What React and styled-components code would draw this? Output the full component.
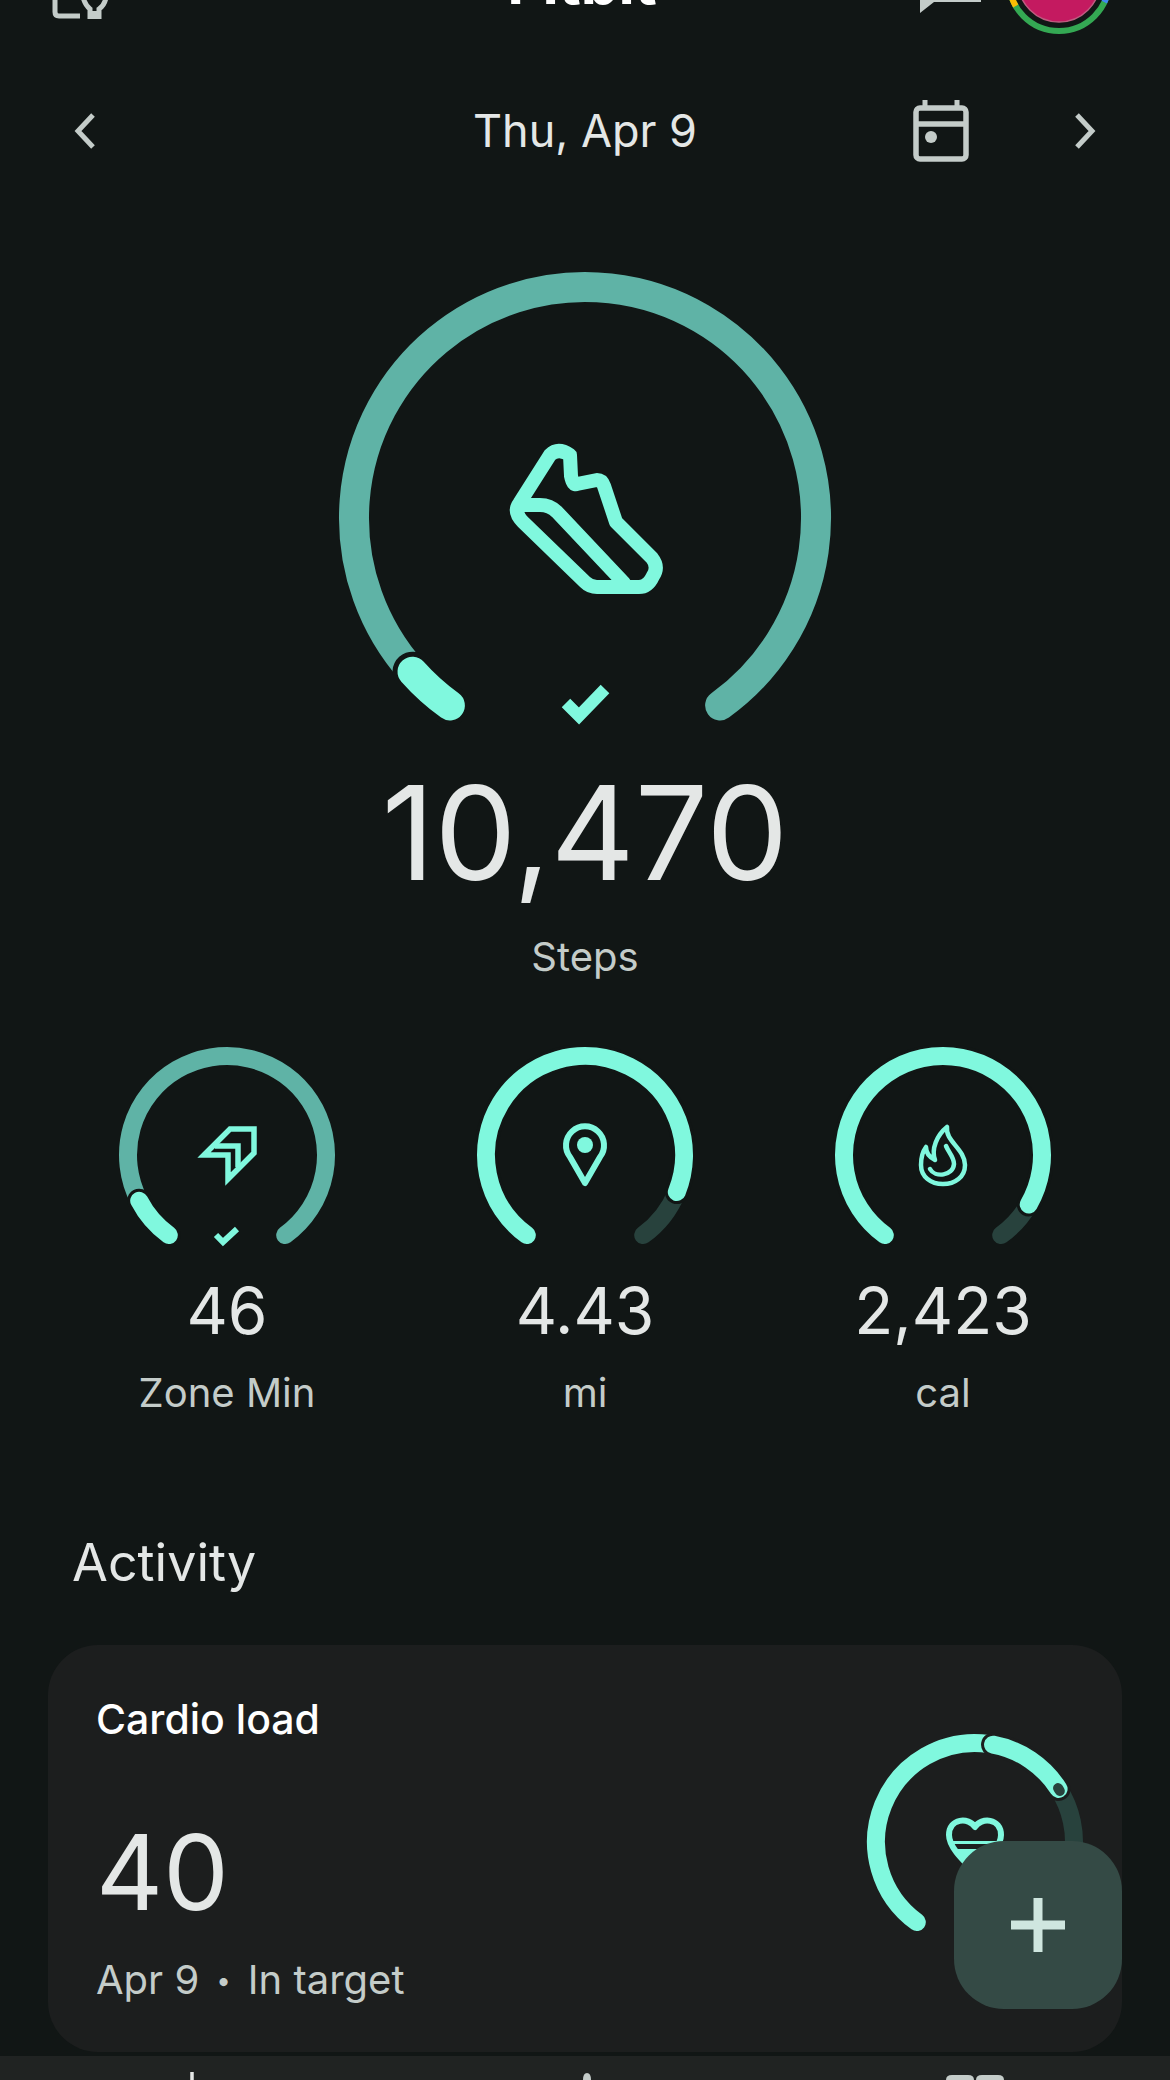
import React from 'react';
import styled, { createGlobalStyle } from 'styled-components';

const BRIGHT = '#80f8de';
const DIM = '#5fb3a6';
const DARK = '#28423d';
const BG = '#111615';
const CARD = '#1c1e1e';

const point = (r, a) => {
  const rad = (a * Math.PI) / 180;
  return [r * Math.sin(rad), -r * Math.cos(rad)];
};

const arcPath = (r, from, to) => {
  const [x0, y0] = point(r, from);
  const [x1, y1] = point(r, to);
  const large = to - from > 180 ? 1 : 0;
  return `M ${x0} ${y0} A ${r} ${r} 0 ${large} 1 ${x1} ${y1}`;
};

function Arc({ r, from, to, width, color, cap = 'round' }) {
  return (
    <path
      d={arcPath(r, from, to)}
      fill="none"
      stroke={color}
      strokeWidth={width}
      strokeLinecap={cap}
    />
  );
}

function Check({ d, width }) {
  return <path d={d} fill="none" stroke={BRIGHT} strokeWidth={width} strokeMiterlimit="8" />;
}

const ShoeIcon = () => (
  <g fill="none" stroke={BRIGHT} strokeWidth="14" strokeLinejoin="round" strokeLinecap="round">
    <path d="M -65.5 -15 L -35 -63 Q -27 -71 -15 -63 L -14 -42 Q -12 -32 -8 -34 L 12 -38 Q 17 -38 19 -32 L 31 4 L 67 40 Q 74 49 68 58 Q 63 69 54 69 L 12 69 Q 5 69 0 64 L -62 4 Q -72 -6 -65.5 -15 Z" />
    <path d="M -65 -13 L -45 -13 Q -35 -13 -28 -6 L 39 65" />
  </g>
);

const ZoneIcon = () => (
  <g fill="none" stroke={BRIGHT} strokeWidth="5.5" strokeMiterlimit="6">
    <path d="M -23 0 L 3 -26 L 27 -26 L 27 -2 L 1 24 L 1 0 Z" />
    <path d="M -12 -9 L 11 -9 L 11 12" />
  </g>
);

const PinIcon = () => (
  <g>
    <path
      d="M 0 28 L -15 2 A 19 19 0 1 1 15 2 Z"
      fill="none"
      stroke={BRIGHT}
      strokeWidth="6"
      strokeLinejoin="round"
    />
    <circle cx="0" cy="-10" r="8" fill={BRIGHT} />
  </g>
);

const FlameIcon = () => (
  <g fill="none" stroke={BRIGHT} strokeWidth="4.5" strokeLinecap="round" strokeLinejoin="round">
    <path d="M 4 -28 C 2 -14 22 -6 22 10 C 22 22 12 29 0 29 C -12 29 -22 22 -22 10 C -22 2 -20 -4 -17 -8 C -17 -2 -14 2 -8 5 C -12 -6 -6 -20 4 -28 Z" />
    <path d="M -13 14 C -8 23 10 21 11 9 C 11 2 6 -2 3 -9" />
  </g>
);

const HeartIcon = () => (
  <g>
    <path
      d="M 0 -15 C -6 -25 -26 -24 -26 -7 C -26 6 -10 20 0 30 C 10 20 26 6 26 -7 C 26 -24 6 -25 0 -15 Z"
      fill="none"
      stroke={BRIGHT}
      strokeWidth="6"
      strokeLinejoin="round"
    />
    <rect x="-24" y="-1" width="48" height="3" fill={BRIGHT} />
    <path d="M -20 7 L 20 7 L 0 28 Z" fill={BRIGHT} />
  </g>
);

const stats = [
  {
    value: '46',
    label: 'Zone Min',
    icon: <ZoneIcon />,
    track: [-117.5, 144],
    trackColor: DIM,
    bright: [-144, -117.5],
    check: true,
  },
  {
    value: '4.43',
    label: 'mi',
    icon: <PinIcon />,
    track: [112, 144],
    trackColor: DARK,
    bright: [-144, 112],
  },
  {
    value: '2,423',
    label: 'cal',
    icon: <FlameIcon />,
    track: [120, 144],
    trackColor: DARK,
    bright: [-144, 120],
  },
];

function StatRing({ stat }) {
  return (
    <RingSvg viewBox="-110 -110 220 202" width="220" height="202">
      <Arc r={99} from={stat.track[0]} to={stat.track[1]} width={18} color={stat.trackColor} />
      <Arc r={99} from={stat.bright[0]} to={stat.bright[1]} width={24} color={BG} />
      <Arc r={99} from={stat.bright[0]} to={stat.bright[1]} width={18} color={BRIGHT} />
      {stat.icon}
      {stat.check && <Check d="M -11 80 L -4 87 L 10 74" width={6} />}
    </RingSvg>
  );
}

export default function App() {
  return (
    <Page>
      <GlobalStyle />
      <Header>
        <HeaderLeft>
          <svg width="60" height="22" viewBox="0 -12 60 22">
            <path d="M 3 -12 L 3 3 Q 3 7 7 7 L 28 7" fill="none" stroke="#c4ccc9" strokeWidth="5" />
            <path d="M 31 -12 Q 33 -4 38 0 L 38 8 L 47 8 L 47 0 Q 53 -4 54 -12" fill="none" stroke="#c4ccc9" strokeWidth="5" />
            <rect x="38" y="2" width="9" height="6" fill="#c4ccc9" />
          </svg>
        </HeaderLeft>
        <AppTitle>Fitbit</AppTitle>
        <HeaderRight>
          <ChatTail width="70" height="16" viewBox="0 0 70 16">
            <path d="M 1 0 L 1 13 L 15 2 L 62 2 L 62 0 Z" fill="#c4ccc9" />
          </ChatTail>
          <svg width="106" height="106" viewBox="-53 -53 106 106">
            <circle r="50" fill="none" stroke="#34a853" strokeWidth="6" />
            <path d={arcPath(50, 20, 115)} fill="none" stroke="#4285f4" strokeWidth="6" />
            <path d={arcPath(50, 240, 262)} fill="none" stroke="#fbbc04" strokeWidth="6" />
            <path d={arcPath(50, 262, 360)} fill="none" stroke="#ea4335" strokeWidth="6" />
            <circle r="41" fill="#c41a60" stroke="#bf5c80" strokeWidth="1.5" />
          </svg>
        </HeaderRight>
      </Header>

      <DateRow>
        <Chevron viewBox="0 0 24 36" width="24" height="36">
          <path d="M 20 2 L 5 18 L 20 34" />
        </Chevron>
        <DateText>Thu, Apr 9</DateText>
        <DateActions>
          <svg width="56" height="62" viewBox="0 0 56 62">
            <rect x="3" y="8" width="50" height="51" rx="4" fill="none" stroke="#c4ccc9" strokeWidth="5.5" />
            <path d="M 3 24 L 53 24" stroke="#c4ccc9" strokeWidth="5.5" />
            <path d="M 12 0 L 12 8 M 44 0 L 44 8" stroke="#c4ccc9" strokeWidth="5" />
            <circle cx="18" cy="37" r="6" fill="#c4ccc9" />
          </svg>
          <Chevron viewBox="0 0 24 36" width="24" height="36">
            <path d="M 4 2 L 19 18 L 4 34" />
          </Chevron>
        </DateActions>
      </DateRow>

      <HeroRing viewBox="-250 -250 500 482" width="500" height="482">
        <Arc r={231} from={-131.7} to={144.2} width={30} color={DIM} />
        <Arc r={231} from={-144.2} to={-131.7} width={40} color={BG} />
        <Arc r={231} from={-144.2} to={-131.7} width={30} color={BRIGHT} />
        <ShoeIcon />
        <Check d="M -19 185 L -6 198 L 20 171" width={12} />
      </HeroRing>
      <HeroValue>10,470</HeroValue>
      <HeroLabel>Steps</HeroLabel>

      <StatsRow>
        {stats.map(stat => (
          <Stat key={stat.label}>
            <StatRing stat={stat} />
            <StatValue>{stat.value}</StatValue>
            <StatLabel>{stat.label}</StatLabel>
          </Stat>
        ))}
      </StatsRow>

      <SectionTitle>Activity</SectionTitle>

      <Card>
        <CardText>
          <CardTitle>Cardio load</CardTitle>
          <CardValue>40</CardValue>
          <CardMeta>
            Apr 9<MetaDot>•</MetaDot>In target
          </CardMeta>
        </CardText>
        <RingSvg viewBox="-110 -110 220 210" width="220" height="210">
          <Arc r={99} from={57} to={144} width={18} color={DARK} />
          <Arc r={99} from={-144} to={8} width={18} color={BRIGHT} />
          <Arc r={99} from={10.5} to={57.6} width={24} color={CARD} />
          <Arc r={99} from={10.5} to={57.6} width={18} color={BRIGHT} />
          <Arc r={99} from={57} to={59} width={10} color={DARK} />
          <HeartIcon />
        </RingSvg>
      </Card>

      <BottomNav>
        <NavSlot>
          <svg width="60" height="8" viewBox="0 0 60 8">
            <path d="M 27 0 L 27 8" stroke="#e4e7e6" strokeWidth="3.5" />
          </svg>
        </NavSlot>
        <NavSlot>
          <svg width="60" height="8" viewBox="0 0 60 8">
            <path d="M 28 8 Q 28 1 32 1 Q 36 1 36 8 Z" fill="#c4ccc9" />
          </svg>
        </NavSlot>
        <NavSlot>
          <svg width="60" height="8" viewBox="0 0 60 8">
            <path d="M 1 8 Q 1 3 7 3 L 23 3 Q 29 3 29 8 Z M 31 8 Q 31 3 37 3 L 53 3 Q 59 3 59 8 Z" fill="#c4ccc9" />
          </svg>
        </NavSlot>
      </BottomNav>

      <Fab>
        <PlusIcon viewBox="0 0 54 54" width="54" height="54">
          <path d="M 27 0 L 27 54 M 0 27 L 54 27" />
        </PlusIcon>
      </Fab>
    </Page>
  );
}

const GlobalStyle = createGlobalStyle`
  html, body {
    margin: 0;
    padding: 0;
    background: ${BG};
  }
  * {
    box-sizing: border-box;
  }
`;

const Page = styled.div`
  position: relative;
  width: 1170px;
  height: 2080px;
  overflow: hidden;
  background: ${BG};
  font-family: Inter, Roboto, 'Liberation Sans', sans-serif;
  color: #e4e7e6;
`;

const Header = styled.header`
  display: grid;
  grid-template-columns: 1fr auto 1fr;
  grid-template-rows: 94px;
  align-items: end;
  height: 94px;
  margin-top: -60px;
  padding: 0 58px 0 52px;
`;

const HeaderLeft = styled.div`
  display: flex;
  padding-bottom: 15px;
  svg {
    display: block;
  }
`;

const AppTitle = styled.div`
  font-size: 60px;
  font-weight: 700;
  line-height: 1;
  color: #fff;
  margin-bottom: 22px;
`;

const HeaderRight = styled.div`
  display: flex;
  justify-content: flex-end;
  align-items: flex-end;
  svg {
    display: block;
  }
`;

const ChatTail = styled.svg`
  margin-right: 17px;
  margin-bottom: 18px;
`;

const DateRow = styled.div`
  display: grid;
  grid-template-columns: 1fr auto 1fr;
  align-items: center;
  height: 62px;
  margin-top: 66px;
  padding: 0 73px;
`;

const Chevron = styled.svg`
  display: block;
  path {
    fill: none;
    stroke: #c4ccc9;
    stroke-width: 5;
  }
`;

const DateText = styled.div`
  padding-bottom: 2px;
  font-size: 45px;
  line-height: 1;
  color: #e4e7e6;
`;

const DateActions = styled.div`
  display: flex;
  justify-content: flex-end;
  align-items: center;
  gap: 104px;
`;

const HeroRing = styled.svg`
  display: block;
  margin: 106px auto 0;
`;

const RingSvg = styled.svg`
  display: block;
  flex-shrink: 0;
`;

const HeroValue = styled.div`
  margin-top: 18px;
  font-size: 130px;
  font-weight: 400;
  line-height: 1;
  text-align: center;
  color: #e4e7e6;
`;

const HeroLabel = styled.div`
  margin-top: 39px;
  font-size: 40px;
  line-height: 1;
  text-align: center;
  color: #c4ccc9;
`;

const StatsRow = styled.div`
  display: grid;
  grid-template-columns: repeat(3, 1fr);
  margin-top: 68px;
  padding: 0 48px;
`;

const Stat = styled.div`
  display: flex;
  flex-direction: column;
  align-items: center;
`;

const StatValue = styled.div`
  margin-top: 32px;
  font-size: 64px;
  line-height: 1;
  color: #e4e7e6;
`;

const StatLabel = styled.div`
  margin-top: 30px;
  font-size: 40px;
  line-height: 1;
  color: #c4ccc9;
`;

const SectionTitle = styled.h2`
  margin: 124px 0 0;
  padding-left: 72px;
  font-size: 52px;
  font-weight: 400;
  line-height: 1;
  color: #e4e7e6;
`;

const Card = styled.section`
  display: flex;
  justify-content: space-between;
  height: 407px;
  margin: 56px 48px 0;
  padding: 87px 37px 0 48px;
  border-radius: 50px;
  background: ${CARD};
`;

const CardText = styled.div`
  margin-top: -33px;
`;

const CardTitle = styled.div`
  font-size: 41px;
  font-weight: 500;
  line-height: 1;
  color: #fff;
`;

const CardValue = styled.div`
  margin-top: 80px;
  font-size: 104px;
  font-weight: 400;
  line-height: 1;
  color: #e4e7e6;
`;

const CardMeta = styled.div`
  margin-top: 36px;
  font-size: 40px;
  line-height: 1;
  color: #c4ccc9;
`;

const MetaDot = styled.span`
  margin: 0 17px;
  font-size: 26px;
  vertical-align: 4px;
`;

const BottomNav = styled.nav`
  display: grid;
  grid-template-columns: repeat(3, 1fr);
  height: 60px;
  margin-top: 4px;
  padding-top: 16px;
  background: #202322;
`;

const NavSlot = styled.div`
  display: flex;
  justify-content: center;
  svg {
    display: block;
  }
`;

const Fab = styled.button`
  position: absolute;
  left: 954px;
  top: 1841px;
  display: flex;
  align-items: center;
  justify-content: center;
  width: 168px;
  height: 168px;
  padding: 0;
  border: 0;
  border-radius: 50px;
  background: #344a45;
`;

const PlusIcon = styled.svg`
  display: block;
  path {
    fill: none;
    stroke: #cfe6df;
    stroke-width: 9;
  }
`;
